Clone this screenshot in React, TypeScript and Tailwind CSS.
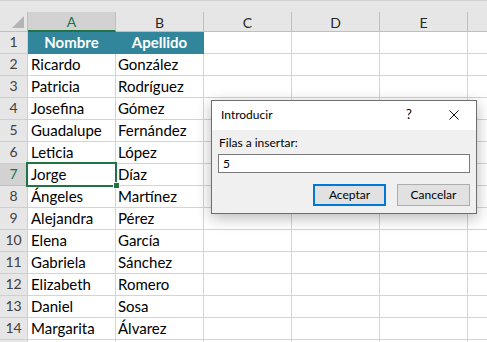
import React from "react"

const rows: [string, string][] = [
  ["Nombre", "Apellido"],
  ["Ricardo", "González"],
  ["Patricia", "Rodríguez"],
  ["Josefina", "Gómez"],
  ["Guadalupe", "Fernández"],
  ["Leticia", "López"],
  ["Jorge", "Díaz"],
  ["Ángeles", "Martínez"],
  ["Alejandra", "Pérez"],
  ["Elena", "García"],
  ["Gabriela", "Sánchez"],
  ["Elizabeth", "Romero"],
  ["Daniel", "Sosa"],
  ["Margarita", "Álvarez"],
  ["", ""],
]

const cols = ["A", "B", "C", "D", "E"]

function HeaderRow() {
  return (
    <div className="flex h-[20px] bg-[#e6e6e6] text-[14px] text-[#262626]">
      <div className="w-[28px] h-full border-r border-b border-[#bfbfbf] flex items-end justify-end pr-[3px] pb-[3px]">
        <svg width="12" height="12" viewBox="0 0 12 12">
          <polygon points="12,0 12,12 0,12" fill="#b4b4b4" />
        </svg>
      </div>
      {cols.map((c) => (
        <div
          key={c}
          className={
            c === "A"
              ? "w-[88px] h-full border-r border-[#bfbfbf] border-b-2 border-b-[#217346] bg-[#d2d2d2] text-[#217346] flex items-center justify-center pt-[1px]"
              : "w-[88px] h-full border-r border-b border-[#bfbfbf] flex items-center justify-center pt-[2px]"
          }
        >
          {c}
        </div>
      ))}
      <div className="flex-1 h-full border-b border-[#bfbfbf]" />
    </div>
  )
}

export default function App() {
  return (
    <div className="relative w-[487px] h-[342px] overflow-hidden bg-white font-['Lato',sans-serif]">
      {/* formula bar edge */}
      <div className="h-[12px] bg-[#e6e6e6] border-t border-[#d0d0d0]" />
      <HeaderRow />

      {rows.map(([a, b], i) => {
        const n = i + 1
        const head = n === 1
        const sel = n === 7
        // last row is only a sliver at the bottom edge, its number is not visible
        const label = n < rows.length ? n : ""
        return (
          <div key={n} className="flex h-[22px] text-[15px] text-black">
            <div
              className={
                sel
                  ? "w-[28px] h-full border-r border-b border-[#bfbfbf] bg-[#d2d2d2] text-[#217346] text-[14px] flex items-end justify-center pb-[2px] leading-[18px]"
                  : "w-[28px] h-full border-r border-b border-[#cfcfcf] bg-[#e6e6e6] text-[#404040] text-[14px] flex items-end justify-center pb-[2px] leading-[18px]"
              }
            >
              {label}
            </div>
            {head ? (
              <>
                <div className="w-[88px] h-full bg-[#31869b] border-r border-b border-[#31869b] text-white font-bold flex items-end justify-center pb-[2px] leading-[18px]">
                  {a}
                </div>
                <div className="w-[88px] h-full bg-[#31869b] border-r border-b border-[#31869b] text-white font-bold flex items-end justify-center pb-[2px] leading-[18px]">
                  {b}
                </div>
              </>
            ) : (
              <>
                <div className="w-[88px] h-full border-r border-b border-[#d4d4d4] flex items-end pl-[3px] pb-[2px] leading-[18px]">
                  {a}
                </div>
                <div className="w-[88px] h-full border-r border-b border-[#d4d4d4] flex items-end pl-[2px] pb-[2px] leading-[18px]">
                  {b}
                </div>
              </>
            )}
            <div className="w-[88px] h-full border-r border-b border-[#d4d4d4]" />
            <div className="w-[88px] h-full border-r border-b border-[#d4d4d4]" />
            <div className="w-[88px] h-full border-r border-b border-[#d4d4d4]" />
            <div className="flex-1 h-full border-b border-[#d4d4d4]" />
          </div>
        )
      })}

      {/* active cell A7 */}
      <div className="absolute left-[26px] top-[162px] w-[91px] h-[25px] border-2 border-[#217346]" />
      <div className="absolute left-[113px] top-[182px] w-[7px] h-[7px] bg-[#217346] border border-white" />

      {/* Introducir dialog */}
      <div className="absolute left-[211px] top-[100px] w-[266px] h-[114px] border border-[#6e6e6e] bg-[#f0f0f0] shadow-[0_4px_14px_rgba(0,0,0,0.28)] flex flex-col text-[12px] text-black">
        <div className="h-[29px] bg-white flex items-center pl-[9px] pr-[17px] pb-[1px]">
          <span className="flex-1">Introducir</span>
          <span className="w-[14px] text-center text-[13px]">?</span>
          <div className="w-[33px]" />
          <svg width="10" height="10" viewBox="0 0 10 10">
            <path d="M0.5 0.5 L9.5 9.5 M9.5 0.5 L0.5 9.5" stroke="#111" strokeWidth="1" fill="none" />
          </svg>
        </div>
        <div className="px-[6px] pt-[5px]">
          <div className="h-[16px] leading-[16px] pl-[1px]">Filas a insertar:</div>
          <div className="mt-[3px] h-[19px] border border-[#7a7a7a] bg-white pl-[4px] leading-[17px]">5</div>
          <div className="mt-[11px] flex justify-end gap-[11px]">
            <button className="w-[73px] h-[22px] border-2 border-[#0078d7] bg-[#e1e1e1] leading-[18px]">Aceptar</button>
            <button className="w-[73px] h-[22px] border border-[#adadad] bg-[#e1e1e1] leading-[20px]">Cancelar</button>
          </div>
        </div>
      </div>
    </div>
  )
}
